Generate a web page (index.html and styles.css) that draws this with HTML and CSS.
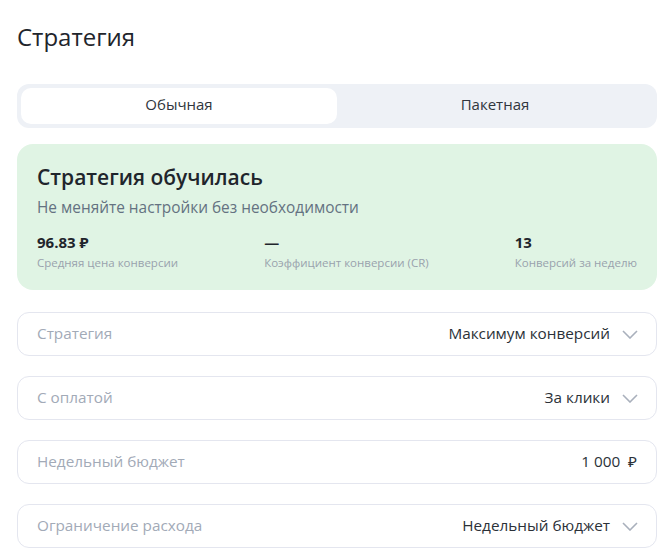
FILE: index.html
```html
<!DOCTYPE html>
<html lang="ru">
<head>
<meta charset="utf-8">
<link rel="stylesheet" href="styles.css">
</head>
<body>
<div class="page">
  <h1 class="title">Стратегия</h1>
  <div class="tabs">
    <div class="tab tab-active">Обычная</div>
    <div class="tab">Пакетная</div>
  </div>
  <div class="card">
    <div class="card-title">Стратегия обучилась</div>
    <div class="card-sub">Не меняйте настройки без необходимости</div>
    <div class="stats">
      <div class="stat"><div class="stat-val">96.83 ₽</div><div class="stat-label">Средняя цена конверсии</div></div>
      <div class="stat"><div class="stat-val">—</div><div class="stat-label">Коэффициент конверсии (CR)</div></div>
      <div class="stat"><div class="stat-val">13</div><div class="stat-label">Конверсий за неделю</div></div>
    </div>
  </div>
  <div class="fields">
    <div class="field"><span class="label">Стратегия</span><span class="value">Максимум конверсий</span><svg class="chev" viewBox="0 0 16 9"><path d="M1 1l7 7 7-7"/></svg></div>
    <div class="field"><span class="label">С оплатой</span><span class="value">За клики</span><svg class="chev" viewBox="0 0 16 9"><path d="M1 1l7 7 7-7"/></svg></div>
    <div class="field"><span class="label">Недельный бюджет</span><span class="value money">1 000&nbsp; ₽</span></div>
    <div class="field"><span class="label">Ограничение расхода</span><span class="value">Недельный бюджет</span><svg class="chev" viewBox="0 0 16 9"><path d="M1 1l7 7 7-7"/></svg></div>
  </div>
</div>
</body>
</html>
```
FILE: styles.css
```css
* { box-sizing: border-box; }
html, body { margin: 0; background: #fff; }
body { font-family: "Open Sans", "Noto Sans", sans-serif; color: #21272e; }
.page { width: 640px; margin-left: 17px; padding-top: 22px; }
.title { margin: 0; font-size: 24px; line-height: 30px; font-weight: 500; color: #1f252c; }
.tabs { margin-top: 32px; height: 44px; background: #eef1f6; border-radius: 12px; padding: 4px; display: flex; }
.tab { flex: 1; display: flex; align-items: center; justify-content: center; font-size: 15px; color: #30363d; border-radius: 10px; padding-bottom: 4px; }
.tab-active { background: #fff; }
.card { margin-top: 16px; height: 146px; background: #e0f4e4; border-radius: 16px; padding: 19px 20px 0 20px; }
.card-title { font-size: 21px; line-height: 28px; font-weight: 600; color: #1f252c; }
.card-sub { margin-top: 7px; font-size: 15.4px; line-height: 20px; color: #647281; }
.stats { margin-top: 15px; display: flex; justify-content: space-between; }
.stat-val { font-size: 15px; line-height: 19px; font-weight: 700; color: #1f252c; }
.stat-label { margin-top: 3px; font-size: 11.5px; line-height: 16px; color: #99a2ad; }
.fields { margin-top: 22px; display: flex; flex-direction: column; gap: 20px; }
.field { height: 44px; border: 1px solid #e4e6ef; border-radius: 12px; display: flex; align-items: center; padding: 0 18px 2px 19px; font-size: 15.3px; }
.label { flex: 1; color: #a2aab7; }
.value { color: #2b3138; }
.money { margin-right: 1px; }
.chev { width: 16px; height: 9px; margin-left: 12px; margin-top: 2px; fill: none; stroke: #a9b0bc; stroke-width: 1.6; }
```
